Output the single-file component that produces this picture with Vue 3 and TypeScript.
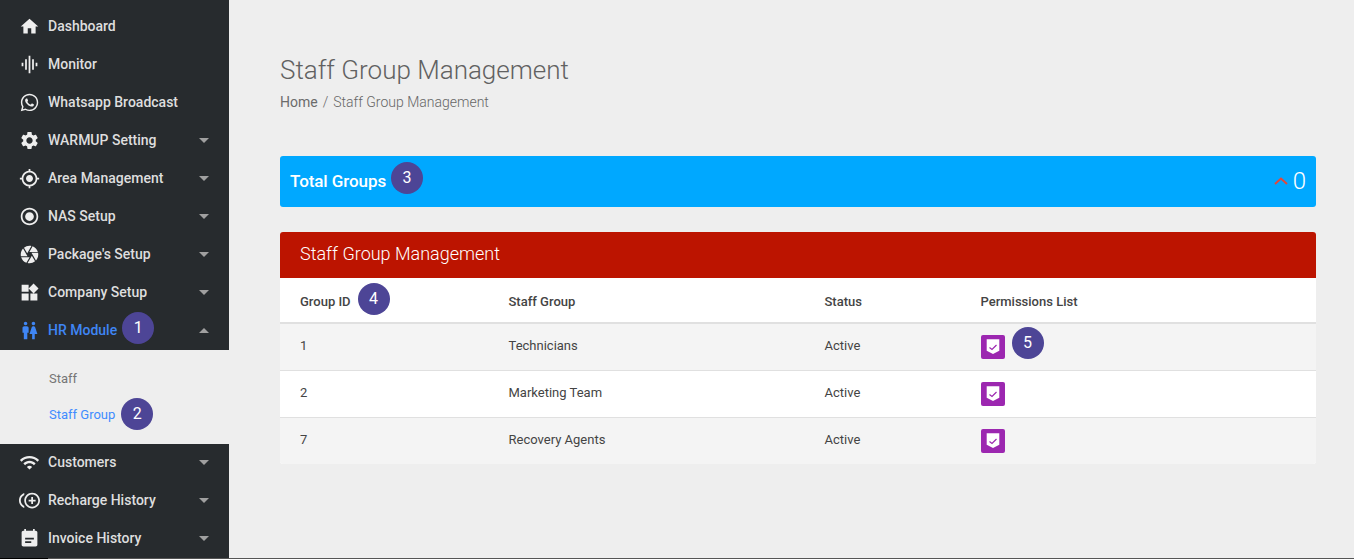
<template>
  <div class="page">
    <div class="layout">
      <aside class="sidebar">
        <template v-for="item in menu" :key="item.label">
          <div class="menu-item" :class="{ active: item.open }">
            <svg class="menu-icon" viewBox="0 0 24 24"><path :d="item.icon" /></svg>
            <span class="menu-label">
              {{ item.label }}
              <span v-if="item.badge" class="badge badge-up2">{{ item.badge }}</span>
            </span>
            <span v-if="item.arrow" class="caret" :class="{ up: item.open }"></span>
          </div>
          <div v-if="item.open" class="submenu">
            <div class="sub-item">Staff</div>
            <div class="sub-item current">
              <span class="menu-label">Staff Group<span class="badge badge-mid">2</span></span>
            </div>
          </div>
        </template>
      </aside>

      <main class="content">
        <h1 class="page-title">Staff Group Management</h1>
        <div class="breadcrumb">
          <span class="home">Home</span>
          <span class="sep">/</span>
          <span>Staff Group Management</span>
        </div>

        <div class="total-bar">
          <span class="menu-label">Total Groups<span class="badge badge-up3">3</span></span>
          <span class="total-value">
            <svg class="chevron" viewBox="0 0 14 8"><path d="M1 7l6-5.5L13 7" /></svg>
            0
          </span>
        </div>

        <section class="card">
          <div class="card-head">Staff Group Management</div>
          <table class="groups">
            <thead>
              <tr>
                <th class="c1"><span class="menu-label">Group ID<span class="badge badge-up2 badge-wide">4</span></span></th>
                <th class="c2">Staff Group</th>
                <th class="c3">Status</th>
                <th>Permissions List</th>
              </tr>
            </thead>
            <tbody>
              <tr v-for="(row, i) in rows" :key="row.id">
                <td>{{ row.id }}</td>
                <td>{{ row.name }}</td>
                <td>{{ row.status }}</td>
                <td>
                  <span class="menu-label">
                    <span class="perm-btn">
                      <svg viewBox="0 0 16 16">
                        <path class="shield" d="M1.7 .3h12.6v11.4L8 15 1.7 11.7z" />
                        <path class="tick" d="M4.5 8.5l2.5 2 4.5-4.5" />
                      </svg>
                    </span>
                    <span v-if="i === 0" class="badge badge-up3 badge-wide">5</span>
                  </span>
                </td>
              </tr>
            </tbody>
          </table>
        </section>
      </main>
    </div>
    <div class="edge"></div>
  </div>
</template>

<script setup lang="ts">
interface MenuItem {
  label: string;
  icon: string;
  arrow?: boolean;
  open?: boolean;
  badge?: string;
}

const menu: MenuItem[] = [
  { label: 'Dashboard', icon: 'M10 20v-6h4v6h5v-8h3L12 3 2 12h3v8z' },
  { label: 'Monitor', icon: 'M7 18h2V6H7v12zm4 4h2V2h-2v20zm-8-8h2v-4H3v4zm12 4h2V6h-2v12zm4-8v4h2v-4h-2z' },
  {
    label: 'Whatsapp Broadcast',
    icon: 'M12.04 2C6.58 2 2.13 6.45 2.13 11.91C2.13 13.66 2.59 15.36 3.45 16.86L2.05 22L7.3 20.62C8.75 21.41 10.38 21.83 12.04 21.83C17.5 21.83 21.95 17.38 21.95 11.92C21.95 9.27 20.92 6.78 19.05 4.91C17.18 3.03 14.69 2 12.04 2M12.05 3.67C14.25 3.67 16.31 4.53 17.87 6.09C19.42 7.65 20.28 9.72 20.28 11.92C20.28 16.46 16.58 20.15 12.04 20.15C10.56 20.15 9.11 19.76 7.85 19L7.55 18.83L4.43 19.65L5.26 16.61L5.06 16.29C4.24 15 3.8 13.47 3.8 11.91C3.81 7.37 7.5 3.67 12.05 3.67M8.53 7.33C8.37 7.33 8.1 7.39 7.87 7.64C7.65 7.89 7 8.5 7 9.71C7 10.93 7.89 12.1 8 12.27C8.14 12.44 9.76 14.94 12.25 16C12.84 16.27 13.3 16.42 13.66 16.53C14.25 16.72 14.79 16.69 15.22 16.63C15.7 16.56 16.68 16.03 16.89 15.45C17.1 14.87 17.1 14.38 17.04 14.27C16.97 14.17 16.81 14.11 16.56 14C16.31 13.86 15.09 13.26 14.87 13.18C14.64 13.1 14.5 13.06 14.31 13.3C14.15 13.55 13.67 14.11 13.53 14.27C13.38 14.44 13.24 14.46 13 14.34C12.74 14.21 11.94 13.95 11 13.11C10.26 12.45 9.77 11.64 9.62 11.39C9.5 11.15 9.61 11 9.73 10.89C9.84 10.78 10 10.6 10.1 10.45C10.23 10.31 10.27 10.2 10.35 10.04C10.43 9.87 10.39 9.73 10.33 9.61C10.27 9.5 9.77 8.26 9.56 7.77C9.36 7.29 9.16 7.35 9 7.34C8.86 7.34 8.7 7.33 8.53 7.33Z',
  },
  {
    label: 'WARMUP Setting',
    arrow: true,
    icon: 'M19.14 12.94c.04-.3.06-.61.06-.94 0-.32-.02-.64-.07-.94l2.03-1.58c.18-.14.23-.41.12-.61l-1.92-3.32c-.12-.22-.37-.29-.59-.22l-2.39.96c-.5-.38-1.03-.7-1.62-.94l-.36-2.54c-.04-.24-.24-.41-.48-.41h-3.84c-.24 0-.43.17-.47.41l-.36 2.54c-.59.24-1.13.57-1.62.94l-2.39-.96c-.22-.08-.47 0-.59.22L2.74 8.87c-.12.21-.08.47.12.61l2.03 1.58c-.05.3-.09.63-.09.94s.02.64.07.94l-2.03 1.58c-.18.14-.23.41-.12.61l1.92 3.32c.12.22.37.29.59.22l2.39-.96c.5.38 1.03.7 1.62.94l.36 2.54c.05.24.24.41.48.41h3.84c.24 0 .44-.17.47-.41l.36-2.54c.59-.24 1.13-.56 1.62-.94l2.39.96c.22.08.47 0 .59-.22l1.92-3.32c.12-.22.07-.47-.12-.61l-2.01-1.58zM12 15.6c-1.98 0-3.6-1.62-3.6-3.6s1.62-3.6 3.6-3.6 3.6 1.62 3.6 3.6-1.62 3.6-3.6 3.6z',
  },
  {
    label: 'Area Management',
    arrow: true,
    icon: 'M12 8c-2.21 0-4 1.79-4 4s1.79 4 4 4 4-1.79 4-4-1.79-4-4-4zm8.94 3c-.46-4.17-3.77-7.48-7.94-7.94V1h-2v2.06C6.83 3.52 3.52 6.83 3.06 11H1v2h2.06c.46 4.17 3.77 7.48 7.94 7.94V23h2v-2.06c4.17-.46 7.48-3.77 7.94-7.94H23v-2h-2.06zM12 19c-3.87 0-7-3.13-7-7s3.13-7 7-7 7 3.13 7 7-3.13 7-7 7z',
  },
  {
    label: 'NAS Setup',
    arrow: true,
    icon: 'M12 7c-2.76 0-5 2.24-5 5s2.24 5 5 5 5-2.24 5-5-2.24-5-5-5zm0-5C6.48 2 2 6.48 2 12s4.48 10 10 10 10-4.48 10-10S17.52 2 12 2zm0 18c-4.42 0-8-3.58-8-8s3.58-8 8-8 8 3.58 8 8-3.58 8-8 8z',
  },
  {
    label: "Package's Setup",
    arrow: true,
    icon: 'M9.4 10.5l4.77-8.26C13.47 2.09 12.75 2 12 2c-2.4 0-4.6.85-6.32 2.25l3.66 6.35.06-.1zM21.54 9c-.92-2.92-3.15-5.26-6-6.34L11.88 9h9.66zm.26 1h-7.49l.29.5 4.76 8.25C21 16.97 22 14.61 22 12c0-.69-.07-1.35-.2-2zM8.54 12l-3.9-6.75C3.01 7.03 2 9.39 2 12c0 .69.07 1.35.2 2h7.49l-1.15-2zm-6.08 3c.92 2.92 3.15 5.26 6 6.34L12.12 15H2.46zm11.27 0l-3.9 6.76c.7.15 1.42.24 2.17.24 2.4 0 4.6-.85 6.32-2.25l-3.66-6.35-.93 1.6z',
  },
  {
    label: 'Company Setup',
    arrow: true,
    icon: 'M13 13v8h8v-8h-8zM3 21h8v-8H3v8zM3 3v8h8V3H3zm13.66-1.31L11 7.34 16.66 13l5.66-5.66-5.66-5.65z',
  },
  {
    label: 'HR Module',
    arrow: true,
    open: true,
    badge: '1',
    icon: 'M5.5 22v-7.5H4V9c0-1.1.9-2 2-2h3c1.1 0 2 .9 2 2v5.5H9.5V22h-4zM18 22v-6h3l-2.54-7.63C18.18 7.55 17.42 7 16.56 7h-.12c-.86 0-1.63.55-1.9 1.37L12 16h3v6h3zM7.5 6c1.11 0 2-.89 2-2s-.89-2-2-2-2 .89-2 2 .89 2 2 2zm9 0c1.11 0 2-.89 2-2s-.89-2-2-2-2 .89-2 2 .89 2 2 2z',
  },
  {
    label: 'Customers',
    arrow: true,
    icon: 'M1 9l2 2c4.97-4.97 13.03-4.97 18 0l2-2C16.93 2.93 7.08 2.93 1 9zm8 8l3 3 3-3c-1.65-1.66-4.34-1.66-6 0zm-4-4l2 2c2.76-2.76 7.24-2.76 10 0l2-2C15.14 9.14 8.87 9.14 5 13z',
  },
  {
    label: 'Recharge History',
    arrow: true,
    icon: 'M16 8h-2v3h-3v2h3v3h2v-3h3v-2h-3zM2 12c0-2.79 1.64-5.2 4.01-6.32V3.52C2.52 4.76 0 8.09 0 12s2.52 7.24 6.01 8.48v-2.16C3.64 17.2 2 14.79 2 12zm13-9c-4.96 0-9 4.04-9 9s4.04 9 9 9 9-4.04 9-9-4.04-9-9-9zm0 16c-3.86 0-7-3.14-7-7s3.14-7 7-7 7 3.14 7 7-3.14 7-7 7z',
  },
  {
    label: 'Invoice History',
    arrow: true,
    icon: 'M19 3h-1V1h-2v2H8V1H6v2H5c-1.11 0-1.99.9-1.99 2L3 19c0 1.1.89 2 2 2h14c1.1 0 2-.9 2-2V5c0-1.1-.9-2-2-2zm-5 14H7v-2h7v2zm3-4H7v-2h10v2z',
  },
];

const rows = [
  { id: 1, name: 'Technicians', status: 'Active' },
  { id: 2, name: 'Marketing Team', status: 'Active' },
  { id: 7, name: 'Recovery Agents', status: 'Active' },
];
</script>

<style scoped>
.page {
  display: flex;
  flex-direction: column;
  height: 559px;
  overflow: hidden;
  background: #eeeeee;
  font-family: Roboto, "Liberation Sans", sans-serif;
}
.layout {
  display: flex;
  flex: 1;
  min-height: 0;
}
.edge {
  height: 1px;
  background: linear-gradient(to right, #000 48px, #555 48px);
}

.sidebar {
  width: 229px;
  flex-shrink: 0;
  padding-top: 7px;
  background: #272b2e;
  box-sizing: border-box;
}
.menu-item {
  display: flex;
  align-items: center;
  height: 38px;
  padding-left: 19px;
  color: #dedede;
  font-size: 14px;
  font-weight: 500;
}
.menu-icon {
  width: 21px;
  height: 21px;
  margin-right: 8px;
  fill: #eeeeee;
  flex-shrink: 0;
}
.menu-item.active {
  height: 39px;
  padding-bottom: 1px;
  box-sizing: border-box;
  color: #3f86f5;
}
.menu-item.active .menu-icon {
  fill: #3f86f5;
}
.menu-label {
  position: relative;
  display: inline-block;
}
.caret {
  margin-left: auto;
  margin-right: 20px;
  border-left: 5px solid transparent;
  border-right: 5px solid transparent;
  border-top: 5px solid #a0a0a0;
}
.caret.up {
  border-top: 0;
  border-bottom: 5px solid #a0a0a0;
}
.submenu {
  padding: 10px 0 12px;
  margin-bottom: -1px;
  background: #eeeeee;
}
.sub-item {
  display: flex;
  align-items: center;
  height: 36px;
  padding-left: 49px;
  color: #757575;
  font-size: 13px;
}
.sub-item.current {
  color: #3f8cff;
}

.badge {
  position: absolute;
  top: 50%;
  left: 100%;
  width: 32px;
  height: 32px;
  margin-top: -16px;
  margin-left: 5px;
  border-radius: 50%;
  background: #4d4596;
  color: #fff;
  font-size: 16px;
  font-weight: 400;
  line-height: 32px;
  text-align: center;
}
.badge-up2 {
  margin-top: -18px;
}
.badge-up3 {
  margin-top: -19px;
}
.badge-mid {
  margin-left: 6px;
}
.badge-wide {
  margin-left: 7px;
}

.content {
  flex: 1;
  min-width: 0;
  padding: 53px 38px 0 51px;
  color: #666;
}
.page-title {
  margin: 0;
  font-size: 26px;
  font-weight: 300;
  line-height: 34px;
  color: #616161;
}
.breadcrumb {
  margin-top: 6px;
  font-size: 14px;
  font-weight: 300;
  line-height: 18px;
  color: #666;
}
.breadcrumb .home {
  font-weight: 400;
  color: #6b6b6b;
}
.sep {
  margin: 0 5px;
}

.total-bar {
  display: flex;
  align-items: center;
  justify-content: space-between;
  height: 51px;
  margin-top: 45px;
  padding: 0 10px 2px;
  box-sizing: border-box;
  border-radius: 3px;
  background: #00a8ff;
  color: #fff;
  font-size: 17px;
  font-weight: 500;
  letter-spacing: -0.08px;
}
.total-value {
  display: flex;
  align-items: center;
  gap: 5px;
  font-size: 24px;
  font-weight: 300;
}
.chevron {
  width: 14px;
  height: 8px;
  fill: none;
  stroke: #e2483d;
  stroke-width: 2;
}

.card {
  margin-top: 25px;
  border-radius: 3px;
  overflow: hidden;
  background: #fff;
}
.card-head {
  height: 46px;
  padding-left: 20px;
  background: #bc1400;
  color: #fff;
  font-size: 18px;
  font-weight: 300;
  line-height: 44px;
}
.groups {
  width: 100%;
  border-collapse: collapse;
  table-layout: fixed;
  font-size: 13px;
  color: #444;
}
.groups th {
  height: 45px;
  padding: 2px 0 0 20px;
  text-align: left;
  font-weight: 500;
  border-bottom: 2px solid #e0e0e0;
  box-sizing: border-box;
}
.groups td {
  height: 47px;
  padding: 0 0 2px 20px;
  border-bottom: 1px solid #e0e0e0;
  box-sizing: border-box;
}
.groups tbody tr:nth-child(odd) {
  background: #f4f4f4;
}
.groups tbody tr:last-child td {
  border-bottom: 0;
}
.c1 {
  width: 208.5px;
}
.c2 {
  width: 316px;
}
.c3 {
  width: 156px;
}
.perm-btn {
  display: flex;
  align-items: center;
  justify-content: center;
  width: 24px;
  height: 24px;
  margin-top: 2px;
  border-radius: 2px;
  background: #9c27b0;
}
.perm-btn svg {
  width: 16px;
  height: 16px;
}
.shield {
  fill: #fff;
}
.tick {
  fill: none;
  stroke: #9c27b0;
  stroke-width: 1.2;
}
</style>
